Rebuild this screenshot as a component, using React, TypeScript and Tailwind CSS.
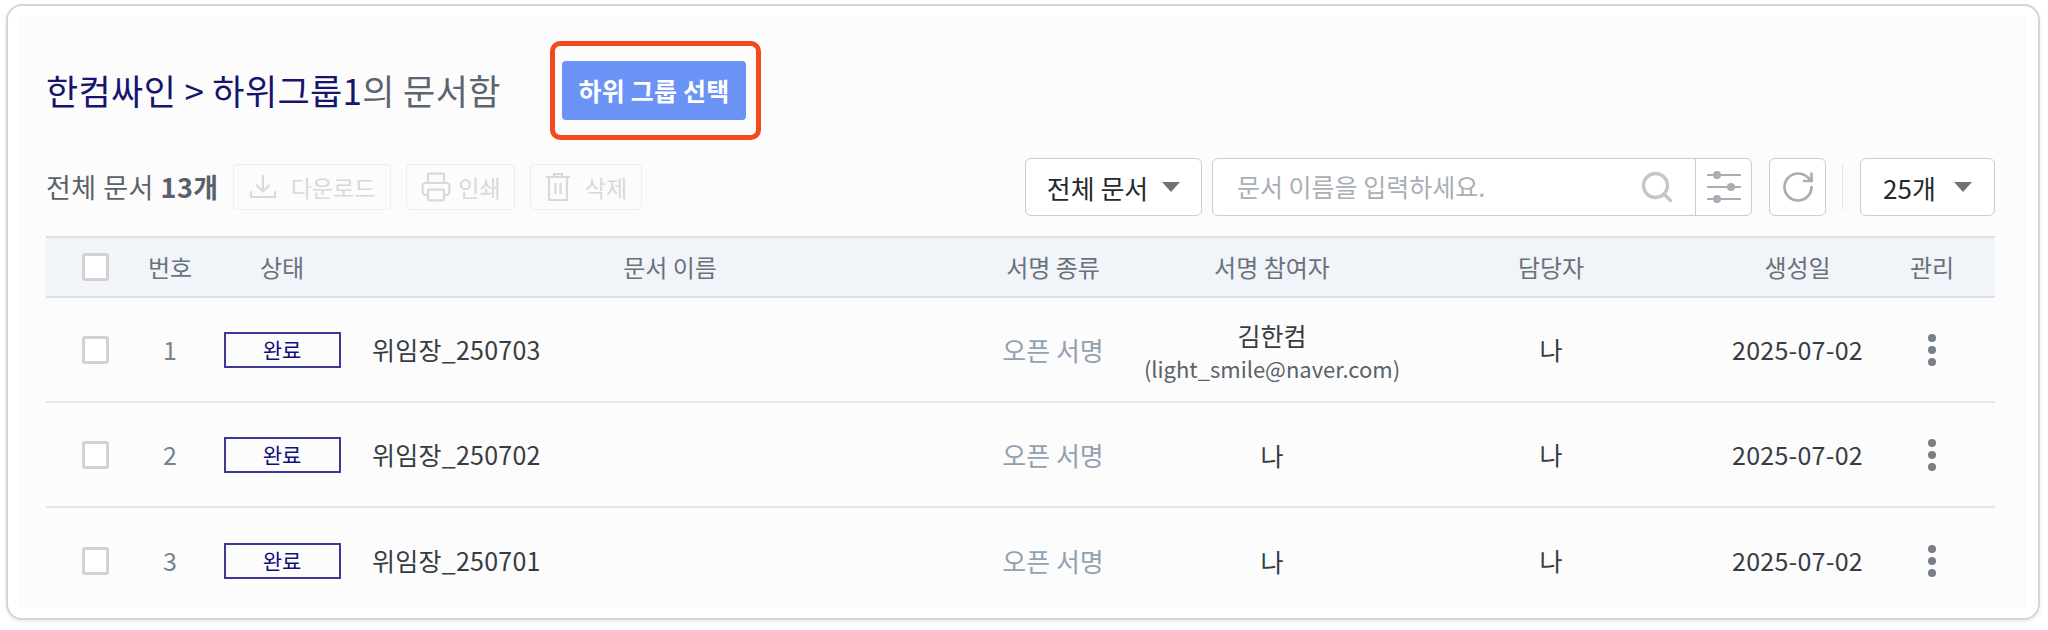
import { Printer, RotateCw, Search } from "lucide-react";

const font = { fontFamily: '"Noto Sans CJK KR", "Noto Sans", sans-serif' };

const cols = "grid grid-cols-[98px_52px_172px_604px_162px_276px_315px_145px_124px] items-center";

const rows = [
  { no: 1, name: "위임장_250703", signer: "김한컴", email: "(light_smile@naver.com)" },
  { no: 2, name: "위임장_250702", signer: "나" },
  { no: 3, name: "위임장_250701", signer: "나" },
];

function Checkbox() {
  return <div className="ml-[36px] h-[28px] w-[27px] rounded-[3px] border-[3px] border-[#d2d2d2] bg-white" />;
}

function Caret() {
  return <div className="h-0 w-0 border-x-[9px] border-t-[10px] border-x-transparent border-t-[#6f7377]" />;
}

function DownloadIcon() {
  return (
    <svg width="28" height="28" viewBox="0 0 28 28" fill="none" stroke="#d6d9dd" strokeWidth="2.2" strokeLinecap="round" strokeLinejoin="round">
      <path d="M14 3v15M8 12.500l6 6 6-6" />
      <path d="M2 19v5h24v-5" />
    </svg>
  );
}

function TrashIcon() {
  return (
    <svg width="26" height="28" viewBox="0 0 26 28" fill="none" stroke="#d6d9dd" strokeWidth="2.2" strokeLinejoin="round">
      <path d="M1 4h24M9 4V1h8v3" />
      <path d="M4 4v23h18V4" />
      <path d="M10.500 10v11M15.500 10v11" />
    </svg>
  );
}

function SlidersIcon() {
  return (
    <svg width="36" height="34" viewBox="0 0 36 34" fill="#a8aeb5" stroke="#a8aeb5" strokeWidth="2">
      <path d="M1 5h34M1 17h34M1 29h34" />
      <circle cx="11" cy="5" r="4" stroke="none" />
      <circle cx="25" cy="17" r="4" stroke="none" />
      <circle cx="11" cy="29" r="4" stroke="none" />
    </svg>
  );
}

function ActionButton({ w, gap, icon, label }: { w: string; gap: string; icon: React.ReactNode; label: string }) {
  return (
    <div className={`flex h-[46px] items-center justify-center rounded-[4px] border border-[#eceef0] ${w} ${gap}`}>
      {icon}
      <span className="text-[23px] text-[#d6d9dd]">{label}</span>
    </div>
  );
}

export default function App() {
  return (
    <div className="h-[630px] w-[2048px] bg-white pl-[6px] pt-[4px]" style={font}>
      <div className="h-[616px] w-[2034px] rounded-[16px] border-2 border-[#d4d5d6] bg-white pl-[10px] pt-[10px] shadow-[0_2px_4px_rgba(0,0,0,0.08)]">
        <div className="h-[592px] w-[2008px] bg-[#fcfcfc] pl-[28px]">
          {/* TITLE */}
          <div className="flex h-[132px] items-start">
            <h1 className="mt-[50px] w-[504px] text-[35px] leading-[48px] font-normal tracking-[0.35px] text-[#5a6570]">
              <span className="text-[#15156e]">한컴싸인 &gt; 하위그룹1</span>의 문서함
            </h1>
            <div className="mt-[25px] rounded-[10px] border-[5px] border-[#f4491f] py-[15px] pl-[7px] pr-[10px]">
              <div className="flex h-[59px] w-[184px] items-center justify-center rounded-[4px] bg-[#6b92f5] text-[25px] font-bold tracking-[0.2px] text-white">
                하위 그룹 선택
              </div>
            </div>
          </div>

          {/* TOOLBAR */}
          <div className="flex h-[88px] w-[1949px] items-start pt-[10px]">
            <div className="flex h-[58px] items-center gap-[15px]">
              <div className="w-[172px] whitespace-nowrap text-[27px] tracking-[0.5px] text-[#59626b]">
                전체 문서 <b className="font-bold">13개</b>
              </div>
              <ActionButton w="w-[158px]" gap="gap-[14px]" icon={<DownloadIcon />} label="다운로드" />
              <ActionButton w="w-[109px]" gap="gap-[6px]" icon={<Printer size={32} color="#d6d9dd" strokeWidth={1.600} />} label="인쇄" />
              <ActionButton w="w-[112px]" gap="gap-[14px]" icon={<TrashIcon />} label="삭제" />
            </div>
            <div className="ml-auto flex h-[58px] items-center">
              <div className="flex h-[58px] w-[177px] items-center justify-center gap-[14px] rounded-[6px] border border-[#c9ccd0] bg-white text-[26px] text-[#24292e]">
                전체 문서 <Caret />
              </div>
              <div className="ml-[10px] flex h-[58px] w-[540px] items-center rounded-[6px] border border-[#c9ccd0] bg-white">
                <span className="ml-[24px] flex-1 text-[25px] text-[#a9afb5]">문서 이름을 입력하세요.</span>
                <Search size={36} color="#c4c7ca" strokeWidth={2.200} className="mr-[20px]" />
                <div className="flex h-full w-[56px] items-center justify-center border-l border-[#c9ccd0]">
                  <SlidersIcon />
                </div>
              </div>
              <div className="ml-[17px] flex h-[58px] w-[57px] items-center justify-center rounded-[6px] border border-[#c9ccd0] bg-white">
                <RotateCw size={36} color="#a8aeb5" strokeWidth={1.800} />
              </div>
              <div className="ml-[16px] h-[46px] w-px bg-[#e4e6e8]" />
              <div className="ml-[17px] flex h-[58px] w-[135px] items-center justify-center gap-[18px] rounded-[6px] border border-[#c9ccd0] bg-white text-[26px] text-[#24292e]">
                25개 <Caret />
              </div>
            </div>
          </div>

          {/* TABLE */}
          <div className={`${cols} h-[62px] w-[1949px] border-y-2 border-[#d9e0e6] bg-[#f1f4f8] text-center text-[24px] text-[#69727b]`}>
            <Checkbox />
            <div>번호</div>
            <div>상태</div>
            <div>문서 이름</div>
            <div>서명 종류</div>
            <div>서명 참여자</div>
            <div className="pr-[33px]">담당자</div>
            <div>생성일</div>
            <div>관리</div>
          </div>

          {rows.map((row) => (
            <div key={row.no} className={`${cols} h-[105px] w-[1949px] border-b-2 border-[#e4e5e6] text-center text-[25px] text-[#363c43] last:border-b-0`}>
              <Checkbox />
              <div className="text-[#76838f]">{row.no}</div>
              <div className="mx-auto flex h-[36px] w-[117px] items-center justify-center border-2 border-[#3a3a96] text-[21px] text-[#10107a]">
                완료
              </div>
              <div className="pl-[4px] text-left tracking-[0.25px]">{row.name}</div>
              <div className="text-[26px] text-[#93a1b0]">오픈 서명</div>
              <div>
                <div className="leading-[36px]">{row.signer}</div>
                {row.email && <div className="text-[22px] leading-[30px] text-[#59626b]">{row.email}</div>}
              </div>
              <div className="pr-[33px]">나</div>
              <div className="tracking-[0.25px]">2025-07-02</div>
              <div className="flex flex-col items-center gap-[4px]">
                <div className="h-[8px] w-[8px] rounded-full bg-[#787f87]" />
                <div className="h-[8px] w-[8px] rounded-full bg-[#787f87]" />
                <div className="h-[8px] w-[8px] rounded-full bg-[#787f87]" />
              </div>
            </div>
          ))}
        </div>
      </div>
    </div>
  );
}
